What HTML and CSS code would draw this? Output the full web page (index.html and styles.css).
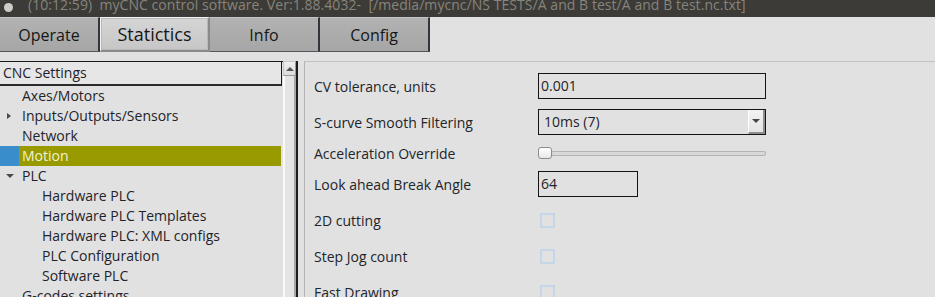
FILE: index.html
```html
<!DOCTYPE html>
<html lang="en">
<head>
    <meta charset="UTF-8">
    <title>myCNC control software</title>
    <link rel="stylesheet" href="styles.css">
</head>
<body>
    <div class="titlebar">
        <span class="app-dot"></span>
        <span class="title-text">(10:12:59)&nbsp; myCNC control software. Ver:1.88.4032-&nbsp; [/media/mycnc/NS TESTS/A and B test/A and B test.nc.txt]</span>
    </div>

    <nav class="tabs">
        <div class="tab">Operate</div>
        <div class="tab active">Statictics</div>
        <div class="tab">Info</div>
        <div class="tab">Config</div>
    </nav>

    <div class="main">
        <div class="tree-wrap">
            <div class="tree">
                <div class="tree-header">CNC Settings</div>
                <div class="tree-item">Axes/Motors</div>
                <div class="tree-item"><span class="arrow closed"></span>Inputs/Outputs/Sensors</div>
                <div class="tree-item">Network</div>
                <div class="tree-item selected">Motion</div>
                <div class="tree-item"><span class="arrow open"></span>PLC</div>
                <div class="tree-item child">Hardware PLC</div>
                <div class="tree-item child">Hardware PLC Templates</div>
                <div class="tree-item child">Hardware PLC: XML configs</div>
                <div class="tree-item child">PLC Configuration</div>
                <div class="tree-item child">Software PLC</div>
                <div class="tree-item">G-codes settings</div>
            </div>
            <div class="scrollbar">
                <div class="scroll-btn"><span class="tri-up"></span></div>
                <div class="scroll-track"></div>
            </div>
        </div>

        <div class="settings">
            <div class="row">
                <div class="label">CV tolerance, units</div>
                <div class="field wide">0.001</div>
            </div>
            <div class="row">
                <div class="label">S-curve Smooth Filtering</div>
                <div class="field wide combo">
                    <span class="combo-text">10ms (7)</span>
                    <span class="combo-btn"><span class="tri-down"></span></span>
                </div>
            </div>
            <div class="row slim">
                <div class="label">Acceleration Override</div>
                <div class="slider">
                    <span class="handle"></span>
                    <span class="groove"></span>
                </div>
            </div>
            <div class="row">
                <div class="label">Look ahead Break Angle</div>
                <div class="field short">64</div>
            </div>
            <div class="row">
                <div class="label">2D cutting</div>
                <div class="check"></div>
            </div>
            <div class="row">
                <div class="label">Step Jog count</div>
                <div class="check"></div>
            </div>
            <div class="row">
                <div class="label">Fast Drawing</div>
                <div class="check"></div>
            </div>
        </div>
    </div>
</body>
</html>
```

FILE: styles.css
```css
:root {
    --bg: #e1e1e1;
    --text: #1f2329;
    --title-bg: #3c3b37;
    --title-text: #86847c;
    --olive: #999900;
    --blue: #3a8dcb;
}

* {
    box-sizing: border-box;
    margin: 0;
    padding: 0;
}

body {
    font-family: 'Open Sans', 'Noto Sans', sans-serif;
    font-size: 14px;
    background: var(--bg);
    color: var(--text);
    width: 935px;
    height: 297px;
    overflow: hidden;
}

/* window title */
.titlebar {
    height: 17px;
    background: var(--title-bg);
    display: flex;
    align-items: flex-end;
    overflow: hidden;
    padding-left: 4px;
}

.app-dot {
    width: 9px;
    height: 9px;
    border-radius: 50%;
    background: #cfcdc8;
    margin-bottom: 5px;
    margin-right: 15px;
}

.title-text {
    color: var(--title-text);
    font-size: 14px;
    line-height: 14px;
    letter-spacing: 0.05px;
    margin-bottom: 5px;
    white-space: nowrap;
}

/* tabs */
.tabs {
    display: flex;
    height: 35px;
}

.tab {
    width: 110px;
    display: flex;
    align-items: center;
    justify-content: center;
    font-size: 16px;
    color: #161616;
    background: linear-gradient(#b2b2b2, #a6a6a6);
    border-right: 2px solid #34343c;
    border-bottom: 1px solid #55555c;
    border-top: 1px solid #c4c4c4;
}

.tab:first-child {
    width: 100px;
}

.tab.active {
    font-size: 18px;
    background: linear-gradient(#d6d6d6, #c6c6c6);
    border: 1px solid #f4f4f4;
    border-right: 2px solid #8a8a8a;
    border-bottom: 2px solid #8a8a8a;
    box-shadow: inset 0 0 0 1px #b8b8b8;
}

/* main area */
.main {
    display: flex;
    margin-top: 9px;
    gap: 6px;
}

.tree-wrap {
    display: flex;
    width: 298px;
    height: 240px;
}

.tree {
    width: 283px;
    border-top: 1px solid #1a1a1a;
}

.tree-header {
    height: 24px;
    line-height: 22px;
    padding-left: 3px;
    border-right: 1px solid #1a1a1a;
    border-bottom: 2px solid #2a2a2a;
    margin-right: 1px;
    background: #e6e6e6;
}

.tree-item {
    height: 20px;
    line-height: 20px;
    padding-left: 22px;
    position: relative;
    white-space: nowrap;
    margin-right: 2px;
}

.tree-item.child {
    padding-left: 42px;
}

.tree-item.selected {
    color: #f2f2d2;
    background: linear-gradient(to right, var(--blue) 19px, var(--olive) 19px);
}

.arrow {
    position: absolute;
    left: 7px;
    top: 7px;
    width: 0;
    height: 0;
}

.arrow.closed {
    border-top: 3.5px solid transparent;
    border-bottom: 3.5px solid transparent;
    border-left: 4px solid #4a4a4a;
}

.arrow.open {
    left: 6px;
    top: 8px;
    border-left: 4px solid transparent;
    border-right: 4px solid transparent;
    border-top: 4px solid #4a4a4a;
}

.scrollbar {
    width: 15px;
    display: flex;
    flex-direction: column;
    border-right: 2px solid #1c1c1c;
}

.scroll-btn {
    height: 15px;
    background: linear-gradient(#efefef, #dcdcdc);
    border: 1px solid #c8c8c8;
    border-right-color: #9a9a9a;
    border-bottom-color: #9a9a9a;
    display: flex;
    align-items: center;
    justify-content: center;
}

.tri-up {
    width: 0;
    height: 0;
    border-left: 4px solid transparent;
    border-right: 4px solid transparent;
    border-bottom: 4px solid #555;
}

.scroll-track {
    flex: 1;
    border-left: 2px solid #fafafa;
    border-right: 2px solid #a8a8a8;
    background: #e4e4e4;
}

/* settings panel */
.settings {
    flex: 1;
    border-top: 1px solid #c2c2c2;
    border-left: 1px solid #b4b4b4;
    padding: 11px 0 0 9px;
    display: flex;
    flex-direction: column;
    gap: 10px;
}

.row {
    display: flex;
    align-items: center;
    height: 26px;
}

.row.slim {
    height: 16px;
}

.label {
    width: 224px;
    color: #22252a;
}

.field {
    height: 26px;
    border: 1px solid #141414;
    line-height: 24px;
    padding-left: 2px;
    background: var(--bg);
}

.field.wide {
    width: 228px;
}

.field.short {
    width: 100px;
}

.combo {
    display: flex;
    justify-content: space-between;
    padding-left: 5px;
}

.combo-btn {
    width: 17px;
    height: 24px;
    background: linear-gradient(#f2f2f2, #e4e4e4);
    border-left: 1px solid #fff;
    border-right: 2px solid #8e8e8e;
    border-bottom: 2px solid #8e8e8e;
    display: flex;
    align-items: center;
    justify-content: center;
}

.tri-down {
    width: 0;
    height: 0;
    border-left: 4px solid transparent;
    border-right: 4px solid transparent;
    border-top: 4px solid #444;
}

.slider {
    width: 228px;
    display: flex;
    align-items: center;
    position: relative;
}

.handle {
    width: 14px;
    height: 12px;
    border-radius: 3px;
    border: 1px solid #8c8c8c;
    background: linear-gradient(#ffffff, #e8e8e8);
    position: relative;
    z-index: 1;
}

.groove {
    flex: 1;
    height: 5px;
    border: 1px solid #b4b4b4;
    border-radius: 2px;
    background: #d9d9d9;
    margin-left: -1px;
}

.check {
    width: 15px;
    height: 15px;
    border: 2px solid #c5d6e9;
    margin-left: 2px;
}
```
